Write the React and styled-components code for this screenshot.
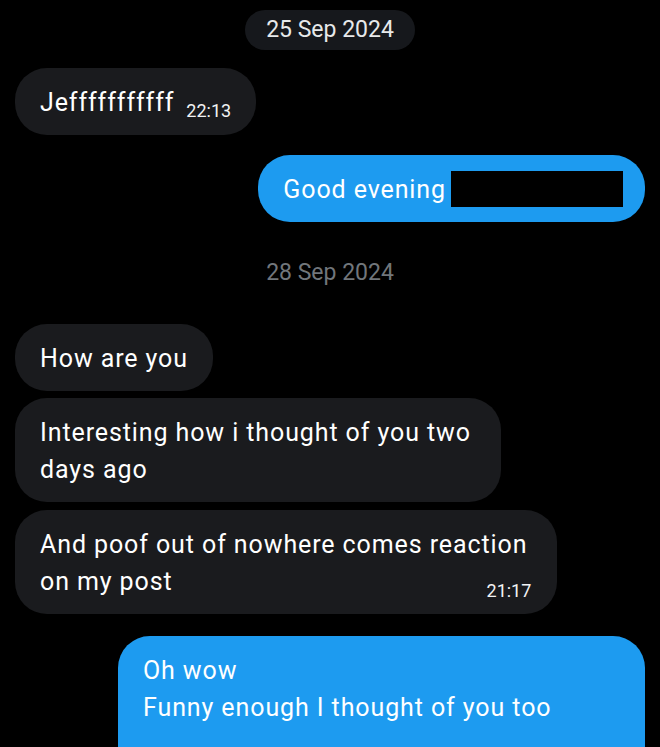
import React from "react";
import styled, { createGlobalStyle } from "styled-components";

const Global = createGlobalStyle`
  html, body { margin: 0; padding: 0; background: #000; }
  body { overflow: hidden; font-family: Roboto, "Liberation Sans", sans-serif; }
`;

const Thread = styled.div`
  display: flex;
  flex-direction: column;
  padding: 10px 15px 0;
  width: 660px;
  box-sizing: border-box;
`;

const DatePill = styled.div`
  align-self: center;
  height: 40px;
  line-height: 40px;
  padding: 0 21px;
  border-radius: 20px;
  background: #16181c;
  color: #e7e9ea;
  font-size: 23px;
  margin-top: ${(p) => p.$gap || 0}px;
`;

const DateLabel = styled.div`
  align-self: center;
  height: 40px;
  line-height: 40px;
  color: #71767b;
  font-size: 23px;
  margin-top: ${(p) => p.$gap || 0}px;
`;

const Bubble = styled.div`
  align-self: ${(p) => (p.$mine ? "flex-end" : "flex-start")};
  background: ${(p) => (p.$mine ? "#1d9bf0" : "#1a1b1e")};
  color: #fff;
  font-size: 25px;
  letter-spacing: 0.9px;
  line-height: 37px;
  padding: 16px ${(p) => p.$padRight || 25}px ${(p) => p.$padBottom || 14}px 25px;
  border-radius: 32px;
  margin-top: ${(p) => p.$gap || 0}px;
  white-space: nowrap;
  box-sizing: border-box;
`;

const InlineTime = styled.span`
  font-size: 18px;
  letter-spacing: 0;
  line-height: 1;
  margin-left: 12px;
  vertical-align: -6px;
  color: #f2f3f4;
`;

const FloatTime = styled.span`
  float: right;
  font-size: 18px;
  letter-spacing: 0;
  line-height: 37px;
  margin-top: 9px;
  margin-right: -4px;
  margin-bottom: -9px;
  color: #f2f3f4;
`;

const Redaction = styled.span`
  display: inline-block;
  width: 172px;
  height: 36px;
  background: #000;
  margin-left: 5px;
  vertical-align: -9px;
`;

export default function App() {
  return (
    <>
      <Global />
      <Thread>
        <DatePill>25 Sep 2024</DatePill>

        <Bubble $gap={18}>
          {"Je" + "f".repeat(11)}
          <InlineTime>22:13</InlineTime>
        </Bubble>

        <Bubble $mine $gap={20} $padRight={22}>
          Good evening
          <Redaction />
        </Bubble>

        <DateLabel $gap={31}>28 Sep 2024</DateLabel>

        <Bubble $gap={31}>How are you</Bubble>

        <Bubble $gap={7} $padRight={30}>
          Interesting how i thought of you two
          <br />
          days ago
        </Bubble>

        <Bubble $gap={8} $padRight={30}>
          And poof out of nowhere comes reaction
          <br />
          on my post
          <FloatTime>21:17</FloatTime>
        </Bubble>

        <Bubble $mine $gap={22} $padBottom={60} style={{ width: 527 }}>
          Oh wow
          <br />
          Funny enough I thought of you too
        </Bubble>
      </Thread>
    </>
  );
}
